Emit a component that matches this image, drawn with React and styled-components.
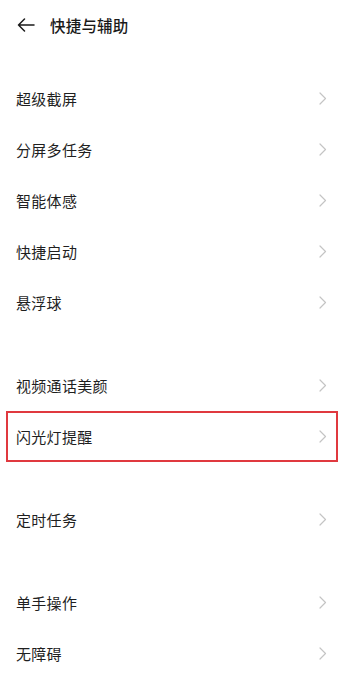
import React from 'react'
import styled, { createGlobalStyle } from 'styled-components'

const GlobalStyle = createGlobalStyle`
  html, body {
    margin: 0;
    padding: 0;
    background: #ffffff;
  }
  body {
    font-family: "Noto Sans CJK SC", "Noto Sans", sans-serif;
    color: #1a1a1a;
  }
`

const sections = [
  ['超级截屏', '分屏多任务', '智能体感', '快捷启动', '悬浮球'],
  ['视频通话美颜', '闪光灯提醒'],
  ['定时任务'],
  ['单手操作', '无障碍'],
]

const Chevron = () => (
  <svg width="8" height="13" viewBox="0 0 8 13" fill="none">
    <path d="M1 1l5.5 5.5L1 12" stroke="#c4c4c4" strokeWidth="1.2" strokeLinecap="round" strokeLinejoin="round" />
  </svg>
)

const BackArrow = () => (
  <svg width="18" height="14" viewBox="0 0 18 14" fill="none">
    <path d="M17 7H1.5M7.5 1L1.5 7l6 6" stroke="#1a1a1a" strokeWidth="1.5" strokeLinecap="round" strokeLinejoin="round" />
  </svg>
)

export default function App() {
  return (
    <Page>
      <GlobalStyle />
      <Header>
        <BackButton><BackArrow /></BackButton>
        <Title>快捷与辅助</Title>
      </Header>
      <List>
        {sections.map((items, i) => (
          <Section key={i}>
            {items.map((label) => (
              <Row key={label} $highlight={label === '闪光灯提醒'}>
                <Label>{label}</Label>
                <Chevron />
              </Row>
            ))}
          </Section>
        ))}
      </List>
    </Page>
  )
}

const Page = styled.div`
  width: 350px;
  min-height: 692px;
  background: #ffffff;
`

const Header = styled.div`
  height: 50px;
  display: flex;
  align-items: center;
  padding-left: 17px;
`

const BackButton = styled.div`
  width: 18px;
  height: 14px;
  display: flex;
  margin-right: 15px;
`

const Title = styled.div`
  font-size: 15.5px;
  font-weight: 500;
  color: #1a1a1a;
  letter-spacing: 0.2px;
`

const List = styled.div`
  padding-top: 23px;
  display: flex;
  flex-direction: column;
  gap: 32px;
`

const Section = styled.div`
  display: flex;
  flex-direction: column;
`

const Row = styled.div`
  box-sizing: border-box;
  height: 51px;
  display: flex;
  align-items: center;
  justify-content: space-between;
  padding: ${(p) => (p.$highlight ? '0 9px 0 8px' : '0 23px 0 16px')};
  margin: ${(p) => (p.$highlight ? '0 12px 0 6px' : '0')};
  border: ${(p) => (p.$highlight ? '2px solid #e0393f' : 'none')};
`

const Label = styled.span`
  font-size: 15px;
  color: #1f1f1f;
  letter-spacing: 0.3px;
`
